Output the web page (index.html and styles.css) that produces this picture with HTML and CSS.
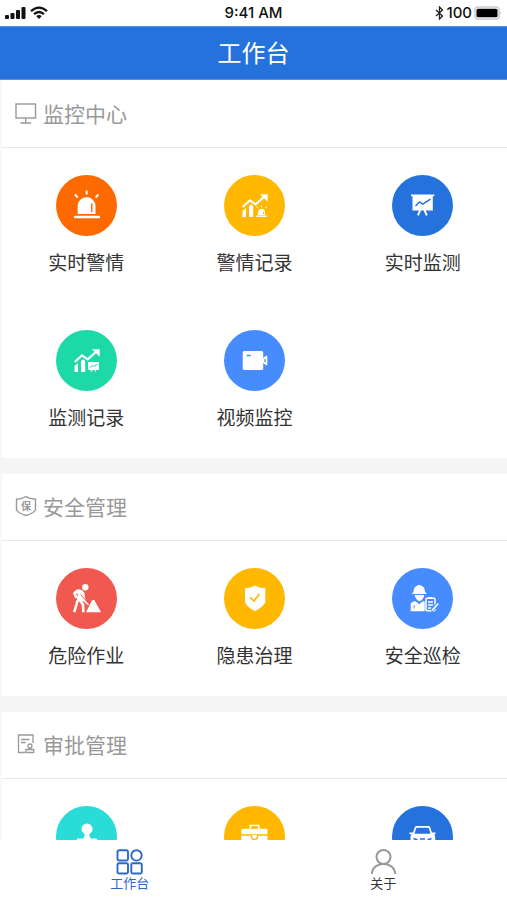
FILE: index.html
```html
<!DOCTYPE html>
<html lang="zh-CN">
<head>
<meta charset="utf-8">
<meta name="viewport" content="width=device-width, initial-scale=1">
<title>工作台</title>
<link rel="stylesheet" href="styles.css">
</head>
<body>
<div class="app">
  <div class="status">
    <div class="status-left">
      <svg width="22" height="14" viewBox="0 0 22 14" aria-hidden="true"><g fill="#111"><rect x="0" y="9" width="4" height="4" rx="1"/><rect x="5.500" y="7" width="4" height="6" rx="1"/><rect x="11" y="4" width="4" height="9" rx="1"/><rect x="16.500" y="1" width="4" height="12" rx="1"/></g></svg>
      <svg width="18" height="14" viewBox="0 0 18 14" aria-hidden="true"><g fill="none" stroke="#111" stroke-width="2.300"><path d="M1 5.200Q9-2 17 5.200"/><path d="M4 8.200Q9 3.800 14 8.200"/></g><path d="M6.200 10Q9 8 11.800 10L9 13z" fill="#111"/></svg>
    </div>
    <span class="time">9:41 AM</span>
    <div class="status-right">
      <svg width="9" height="14" viewBox="0 0 9 14" aria-hidden="true"><path d="M1 4l6.500 6L4.500 13V1l3 3L1 10" fill="none" stroke="#222" stroke-width="1.300"/></svg>
      <span>100</span>
      <svg class="battery" width="28" height="14" viewBox="0 0 28 14" aria-hidden="true"><rect x="1" y="1" width="24" height="12" rx="3" fill="#fff" stroke="#ccc" stroke-width="1.500"/><rect x="2.500" y="2.800" width="21" height="8.500" rx="1.500" fill="#000"/><path d="M26.500 5v4q1.500-2 0-4z" fill="#aaa"/></svg>
    </div>
  </div>
  <header class="topbar"><h1>工作台</h1></header>

  <main class="content">
    <section class="panel">
      <h2><svg class="h-icon" viewBox="0 0 22 22" aria-hidden="true"><g fill="none" stroke="#999" stroke-width="1.400"><rect x="1" y="2" width="19.500" height="14"/><path d="M10.700 16v5M5.500 21H16"/></g></svg>监控中心</h2>
      <div class="grid">
        <a href="#" class="item"><svg class="disc orange" viewBox="0 0 61 61" aria-hidden="true"><path d="M21.700 39V31a8.900 9 0 0 1 17.800 0v8z" fill="#fff"/><path d="M19 42h24" stroke="#fff" stroke-width="2.400" stroke-linecap="round"/><path d="M30.700 15.500v4M19 19.500l2.700 3.200M42.300 19.500l-2.700 3.200" stroke="#fff" stroke-width="2"/><path d="M35.700 28.500V37" stroke="#ff6a00" stroke-width="1.500"/></svg><span>实时警情</span></a>
        <a href="#" class="item"><svg class="disc amber" viewBox="0 0 61 61" aria-hidden="true"><path d="M18.700 32L26 25.300l5.700 4L41 21" fill="none" stroke="#fff" stroke-width="2.200"/><path d="M36 19.300h7.700v7.400z" fill="#fff"/><path d="M18.500 36l3.500-3v9h-3.500zM25 31l2-1.800 2.200 1.800v11H25zM34 40v-2.500a3.500 3.700 0 0 1 7 0V40zM32.300 40.600h10.500V42H32.300z" fill="#fff"/><path d="M32 31.500l1.800 1.500M37.500 30.500v1.800M43 31.500L41.200 33" stroke="#fff" stroke-width="1"/><path d="M39.500 36.500V39" stroke="#ffb700" stroke-width="1"/></svg><span>警情记录</span></a>
        <a href="#" class="item"><svg class="disc blue" viewBox="0 0 61 61" aria-hidden="true"><path d="M19 19.500h23.300v1.700h-1.500v14.300H20.500V21.200H19z" fill="#fff"/><path d="M28.200 35l-2.200 5.300M32.400 35l2.400 5.300" stroke="#fff" stroke-width="1.900"/><path d="M23.500 31l4-4 3.300 2.200 7.700-5" fill="none" stroke="#2672dc" stroke-width="1.500"/></svg><span>实时监测</span></a>
        <a href="#" class="item"><svg class="disc green" viewBox="0 0 61 61" aria-hidden="true"><path d="M18.700 32L26 25.300l5.700 4L41 21" fill="none" stroke="#fff" stroke-width="2.200"/><path d="M36 19.300h7.700v7.400z" fill="#fff"/><path d="M18.500 36l3.500-3v9h-3.500zM25 31l2-1.800 2.200 1.800v11H25zM32 32h11v8h-3.500l.8 1.500h-1.300L38.200 40h-1.500l-1 1.500h-1.300l.8-1.500H32z" fill="#fff"/><path d="M34 37.500l2.500-2 1.500 1 3.500-2.500" fill="none" stroke="#1dd9a7" stroke-width="1"/></svg><span>监测记录</span></a>
        <a href="#" class="item"><svg class="disc sky" viewBox="0 0 61 61" aria-hidden="true"><rect x="18.700" y="21" width="20.500" height="19" rx="1.500" fill="#fff"/><path d="M39.500 29l3-2.500v8l-3-2.500z" fill="none" stroke="#fff" stroke-width="1.700" stroke-linejoin="round"/><path d="M22.700 25.400h4" stroke="#468cff" stroke-width="1.500"/></svg><span>视频监控</span></a>
      </div>
    </section>

    <section class="panel">
      <h2><svg class="h-icon" viewBox="0 0 22 22" aria-hidden="true"><path d="M11 1.500Q14.500 4 20.500 4.200V15Q19 18 11 20.500 3 18 1.500 15V4.200Q7.500 4 11 1.500z" fill="none" stroke="#999" stroke-width="1.400"/><text class="seal" x="11" y="15" text-anchor="middle">保</text></svg>安全管理</h2>
      <div class="grid">
        <a href="#" class="item"><svg class="disc red" viewBox="0 0 61 61" aria-hidden="true"><circle cx="29.300" cy="19.300" r="3.200" fill="#fff"/><path d="M17 25q2.500-3.500 6-3.700 3.500.2 5.300 3.200L29.500 32l3.700 4.200-1 1L27 33l-5.500.5-1-4-1.300 1z" fill="#fff"/><path d="M20.300 25.800l1.800 1.600" stroke="#f1584f" stroke-width="1.200"/><path d="M21.500 32.500l-1 4-2.300 7.700M24 32.500l3 4 .3 7.700" fill="none" stroke="#fff" stroke-width="2.600"/><path d="M24.500 26.500L33 36" stroke="#f1584f" stroke-width="1"/><path d="M30 44.300L36 32.500q1.300-1.500 2.600 0L45 44.300z" fill="#fff"/></svg><span>危险作业</span></a>
        <a href="#" class="item"><svg class="disc amber" viewBox="0 0 61 61" aria-hidden="true"><path d="M21 20.300q6-.3 10-2.800 4 2.500 10.300 2.800v14Q39 39 31 43.300 23 39 21 34.300z" fill="#fff"/><path d="M26 29.300l4 3.700 5.500-7" fill="none" stroke="#ffb700" stroke-width="1.700"/></svg><span>隐患治理</span></a>
        <a href="#" class="item"><svg class="disc sky" viewBox="0 0 61 61" aria-hidden="true"><path d="M21.500 24.500q0-6 4-6.700v-.8h3.500v.8q4 .7 4 6.700h1.300V26H20.300v-1.500zM22.700 27h9.500q-.5 4.500-4.700 6.300-4.200-1.800-4.800-6.300zM18.700 43.300V36q.3-2.300 5-2.800l3.500 3 3.500-3 2 .4v9.700z" fill="#fff"/><path d="M22.200 37v3.500" stroke="#468cff" stroke-width="1"/><rect x="34" y="30.300" width="9" height="12.500" rx="1" fill="#468cff" stroke="#fff" stroke-width="1.500"/><path d="M36.500 29.700h4M36 34h5M36 37h5M36 40h3" stroke="#fff" stroke-width="1.400"/><path d="M46.300 35.300l-5.800 6.300-1.300 1" stroke="#468cff" stroke-width="3.500"/><path d="M46.300 35.500L40 42.500" stroke="#fff" stroke-width="1.700"/></svg><span>安全巡检</span></a>
      </div>
    </section>

    <section class="panel">
      <h2><svg class="h-icon" viewBox="0 0 22 22" aria-hidden="true"><g fill="none" stroke="#999" stroke-width="1.300"><path d="M10 19.500H3.500V2H18v8M6 6.500h8.500M6 9.500h4.500"/><circle cx="15" cy="13" r="2"/><path d="M14.300 15v1.500H11v3h7.700v-3h-3V15"/></g></svg>审批管理</h2>
      <div class="grid">
        <a href="#" class="item" aria-label="审批"><svg class="disc teal" viewBox="0 0 61 61" aria-hidden="true"><path d="M28.500 28a5.500 5.500 0 1 1 5 0q-.5 3 1.500 4.500h5q1.500.3 1.500 2V42h-21v-7.500q0-1.700 1.500-2h5q2-1.500 1.500-4.500z" fill="#fff"/></svg></a>
        <a href="#" class="item" aria-label="工具"><svg class="disc amber" viewBox="0 0 61 61" aria-hidden="true"><path d="M26.300 23v-3.500h8.500V23" fill="none" stroke="#fff" stroke-width="1.700"/><path d="M18.500 22.700h24q1 0 1 1v4.500H17.300v-4.500q0-1 1.200-1zM17.300 29.700h26.200V42H17.300z" fill="#fff"/><path d="M27.500 29v1.500a3 3 0 0 0 6 0V29" fill="#fff" stroke="#ffb700" stroke-width="1.400"/></svg></a>
        <a href="#" class="item" aria-label="车辆"><svg class="disc blue" viewBox="0 0 61 61" aria-hidden="true"><path d="M21.500 28l2-6.300q.3-.9 1.300-.9h11.400q1 0 1.300.9l2 6.300" fill="none" stroke="#fff" stroke-width="1.700"/><path d="M17.500 26.500h3.500l1.500 1.200h16l1.500-1.200h3.500v1.800H42q1.200 1 1.200 3V41H18.500v-9.700q0-2 1.200-3h-2.200z" fill="#fff"/><path d="M21.500 32.500l4 1.500M39.500 32.500l-4 1.500M28 33h5" stroke="#2672dc" stroke-width="1.700"/></svg></a>
      </div>
    </section>
  </main>

  <nav class="tabbar">
    <a href="#" class="tab active"><svg viewBox="0 0 27 26" aria-hidden="true"><g fill="none" stroke="#2d69cb" stroke-width="1.900"><rect x="1.500" y="1.300" width="10.500" height="10.200" rx="1.500"/><circle cx="20.500" cy="6.400" r="5.200"/><rect x="1.500" y="14.300" width="10.500" height="10.200" rx="1.500"/><rect x="15.300" y="14.300" width="10.500" height="10.200" rx="1.500"/></g></svg>工作台</a>
    <a href="#" class="tab"><svg viewBox="0 0 27 26" aria-hidden="true"><g fill="none" stroke="#999" stroke-width="2"><circle cx="13.500" cy="8" r="7"/><path d="M1.800 25C2.500 11.500 24.500 11.500 25.200 25"/></g></svg>关于</a>
  </nav>
</div>
</body>
</html>
```
FILE: styles.css
```css
* { box-sizing: border-box; }

body {
  margin: 0;
  background: #fff;
  color: #333;
  font-family: "Noto Sans CJK SC", sans-serif;
}

a { color: inherit; text-decoration: none; }

svg { display: block; flex: none; }

.app {
  display: flex;
  flex-direction: column;
  height: 100vh;
  overflow: hidden;
}

.status {
  display: grid;
  grid-template-columns: 1fr auto 1fr;
  align-items: center;
  flex: none;
  height: 26px;
  padding: 0 5px;
  color: #111;
  font: 500 15px/26px Inter, "Liberation Sans", sans-serif;
}

.status-left,
.status-right { display: flex; align-items: center; gap: 3px; }

.status-right { justify-content: flex-end; gap: 2px; }

.topbar {
  flex: none;
  height: 54px;
  background: #2672dc;
  border-top: 1px solid #4e92ea;
  border-bottom: 1px solid #4e92ea;
  color: #fff;
  text-align: center;
}

.topbar h1 { margin: 0; font-size: 24px; font-weight: 400; line-height: 50px; }

.content {
  display: flex;
  flex: 1;
  flex-direction: column;
  gap: 16px;
  min-height: 0;
  padding-top: 1px;
  overflow: hidden;
  background: linear-gradient(#fff 1px, #f5f5f5 1px);
}

.panel {
  flex: none;
  background: #fff;
  border-left: 2px solid #f7f7f7;
}

.panel h2 {
  display: flex;
  align-items: center;
  gap: 6px;
  height: 67px;
  margin: 0;
  padding: 0 0 3px 13px;
  border-bottom: 1px solid #e8e8e8;
  color: #999;
  font-size: 21px;
  font-weight: 400;
  line-height: 60px;
}

.h-icon { width: 22px; height: 22px; }

.seal { fill: #999; font-size: 10px; font-weight: 700; }

.grid {
  display: grid;
  grid-template-columns: repeat(3, 1fr);
  row-gap: 54px;
  padding: 27px 0;
}

.item {
  display: flex;
  flex-direction: column;
  align-items: center;
  gap: 12px;
  font-size: 19px;
  line-height: 28px;
}

.disc { width: 61px; height: 61px; border-radius: 50%; }

.orange { background: #ff6a00; }
.amber { background: #ffb700; }
.blue { background: #2672dc; }
.green { background: #1dd9a7; }
.sky { background: #468cff; }
.red { background: #f1584f; }
.teal { background: #29dcd8; }

.tabbar {
  display: flex;
  flex: none;
  justify-content: space-around;
  height: 60px;
  padding-top: 9px;
  background: #fff;
}

.tab {
  display: flex;
  flex-direction: column;
  align-items: center;
  font-size: 13px;
  line-height: 16px;
}

.tab svg { width: 27px; height: 26px; }

.active { color: #2d69cb; }
```
